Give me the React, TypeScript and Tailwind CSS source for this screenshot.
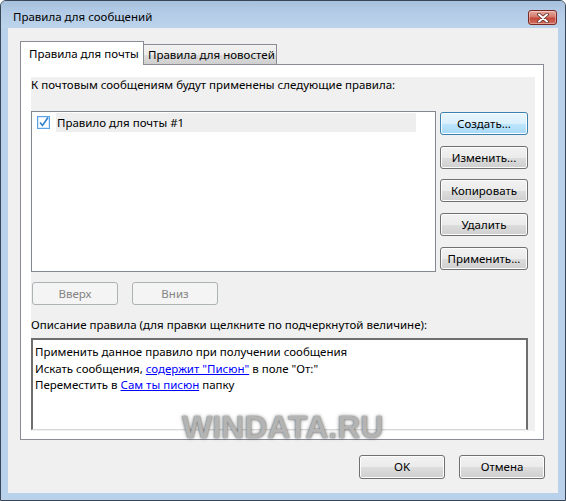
import React from "react";

type BtnKind = "normal" | "default" | "disabled";

function Btn({ children, w, kind = "normal", className = "" }: { children: React.ReactNode; w: string; kind?: BtnKind; className?: string }) {
  const base = "h-[23px] rounded-[3px] border flex items-center justify-center text-[11.5px] leading-none shrink-0 ";
  const k =
    kind === "default"
      ? "border-[#3c7fb1] bg-[linear-gradient(180deg,#eaf6fd_0%,#d9f0fc_50%,#bee6fd_51%,#a7d9f5_100%)] shadow-[inset_0_0_0_1px_#fafdff] text-black"
      : kind === "disabled"
      ? "border-[#adb2b5] bg-[#f4f4f4] text-[#838383]"
      : "border-[#707070] bg-[linear-gradient(180deg,#f2f2f2_0%,#ebebeb_50%,#dddddd_51%,#cfcfcf_100%)] shadow-[inset_0_0_0_1px_#fcfcfc] text-black";
  return <div className={base + k + " " + w + " " + className}>{children}</div>;
}

export default function App() {
  return (
    <div className="relative w-[566px] h-[501px] bg-white font-['Noto_Sans',sans-serif] text-[11.5px] text-black overflow-hidden">
      <div className="w-full h-full flex flex-col rounded-t-[6px] border border-[#3a4656] bg-[#b9d1ea]">
        {/* Title bar */}
        <div className="h-[27px] shrink-0 flex items-start justify-between rounded-t-[5px] bg-[linear-gradient(180deg,#a6c1de_0%,#b3cbe6_40%,#bcd3ec_100%)]">
          <div className="pl-[12px] pt-[8px] leading-[16px] text-[11.5px] text-black">Правила для сообщений</div>
          <div className="mt-[9px] mr-[8px] w-[29px] h-[15px] rounded-[3px] border border-[#7a2a22] bg-[linear-gradient(180deg,#e8aaa0_0%,#d47a6c_45%,#c4483a_55%,#d2705e_100%)] flex items-center justify-center shadow-[inset_0_0_0_1px_rgba(255,255,255,0.35)]">
            <svg width="12" height="10" viewBox="0 0 12 10">
              <path d="M2 1.5 L10 8.5 M10 1.5 L2 8.5" stroke="#5a2a25" strokeWidth="3.6" strokeLinecap="round" />
              <path d="M2 1.5 L10 8.5 M10 1.5 L2 8.5" stroke="#ffffff" strokeWidth="2" strokeLinecap="round" />
            </svg>
          </div>
        </div>
        {/* Client area */}
        <div className="mx-[7px] mb-[7px] flex-1 bg-[#f0f0f0] pl-[12px] pr-[14px] pt-[13px] flex flex-col">
          {/* Tabs */}
          <div className="flex items-end h-[23px]">
            <div className="relative z-10 h-[24px] -mb-px w-[124px] border border-b-0 border-[#898c95] bg-white pl-[8px] pt-[4px] leading-[16px] whitespace-nowrap">
              Правила для почты
            </div>
            <div className="h-[20px] w-[133px] border border-l-0 border-b-0 border-[#898c95] bg-[linear-gradient(180deg,#f2f2f2_0%,#ebebeb_50%,#dddddd_51%,#cfcfcf_100%)] pl-[4px] pt-[2px] leading-[16px] whitespace-nowrap">
              Правила для новостей
            </div>
          </div>
          {/* Panel */}
          <div className="h-[376px] border border-[#898c95] bg-white pl-[10px] pr-[8px] pt-[12px] pb-[8px]">
            <div className="h-full bg-[#f0f0f0] flex flex-col">
              <div className="h-[16px] leading-[16px] whitespace-nowrap">К почтовым сообщениям будут применены следующие правила:</div>
              <div className="mt-[18px] flex items-start">
                <div className="w-[405px] h-[161px] border border-[#828790] bg-white pl-[5px] pt-[1px]">
                  <div className="flex items-center h-[19px]">
                    <svg width="13" height="13" viewBox="0 0 13 13" className="shrink-0 mr-[6px]">
                      <rect x="0.5" y="0.5" width="12" height="12" fill="#ffffff" stroke="#5aa2e6" />
                      <rect x="1.5" y="1.5" width="10" height="10" fill="none" stroke="#d6ebfb" />
                      <path d="M3 6.5 L5.5 9.5 L11 1.5" stroke="#2f7fd0" strokeWidth="1.6" fill="none" />
                    </svg>
                    <div className="w-[360px] h-[19px] bg-[#eeeeee] leading-[19px] pl-[1px]">Правило для почты #1</div>
                  </div>
                </div>
                <div className="ml-[4px] mt-[1px] flex flex-col">
                  <Btn w="w-[88px]" kind="default">Создать...</Btn>
                  <Btn w="w-[88px]" className="mt-[11px]">Изменить...</Btn>
                  <Btn w="w-[88px]" className="mt-[10px]">Копировать</Btn>
                  <Btn w="w-[88px]" className="mt-[11px]">Удалить</Btn>
                  <Btn w="w-[88px]" className="mt-[11px]">Применить...</Btn>
                </div>
              </div>
              <div className="mt-[10px] ml-[1px] flex gap-[14px]">
                <Btn w="w-[86px]" kind="disabled">Вверх</Btn>
                <Btn w="w-[86px]" kind="disabled">Вниз</Btn>
              </div>
              <div className="mt-[12px] h-[16px] leading-[16px] whitespace-nowrap">
                Описание правила (для правки щелкните по подчеркнутой величине):
              </div>
              <div className="mt-[5px] w-[497px] h-[92px] bg-white border-solid border-t-2 border-l-2 border-r-2 border-b border-t-[#6e6e6e] border-l-[#6e6e6e] border-r-[#6e6e6e] border-b-[#d8d8d8] pl-[2px] pt-[4px] leading-[16.5px]">
                <div>Применить данное правило при получении сообщения</div>
                <div>
                  Искать сообщения, <span className="text-[#0000ff] underline">содержит "Писюн"</span> в поле "От:"
                </div>
                <div>
                  Переместить в <span className="text-[#0000ff] underline">Сам ты писюн</span> папку
                </div>
              </div>
            </div>
          </div>
          {/* Bottom buttons */}
          <div className="mt-[15px] flex justify-end gap-[14px] -mr-px">
            <Btn w="w-[86px]" className="h-[24px]">OK</Btn>
            <Btn w="w-[86px]" className="h-[24px]">Отмена</Btn>
          </div>
        </div>
      </div>
      {/* Watermark */}
      <div className="absolute left-[182px] top-[411px] font-['Liberation_Sans',sans-serif] font-bold text-[32px] leading-none text-[#b4b4b4] [text-shadow:0_0_2px_rgba(0,0,0,0.55),0_0_4px_rgba(0,0,0,0.3)] select-none pointer-events-none whitespace-nowrap">
        WINDATA.RU
      </div>
    </div>
  );
}
